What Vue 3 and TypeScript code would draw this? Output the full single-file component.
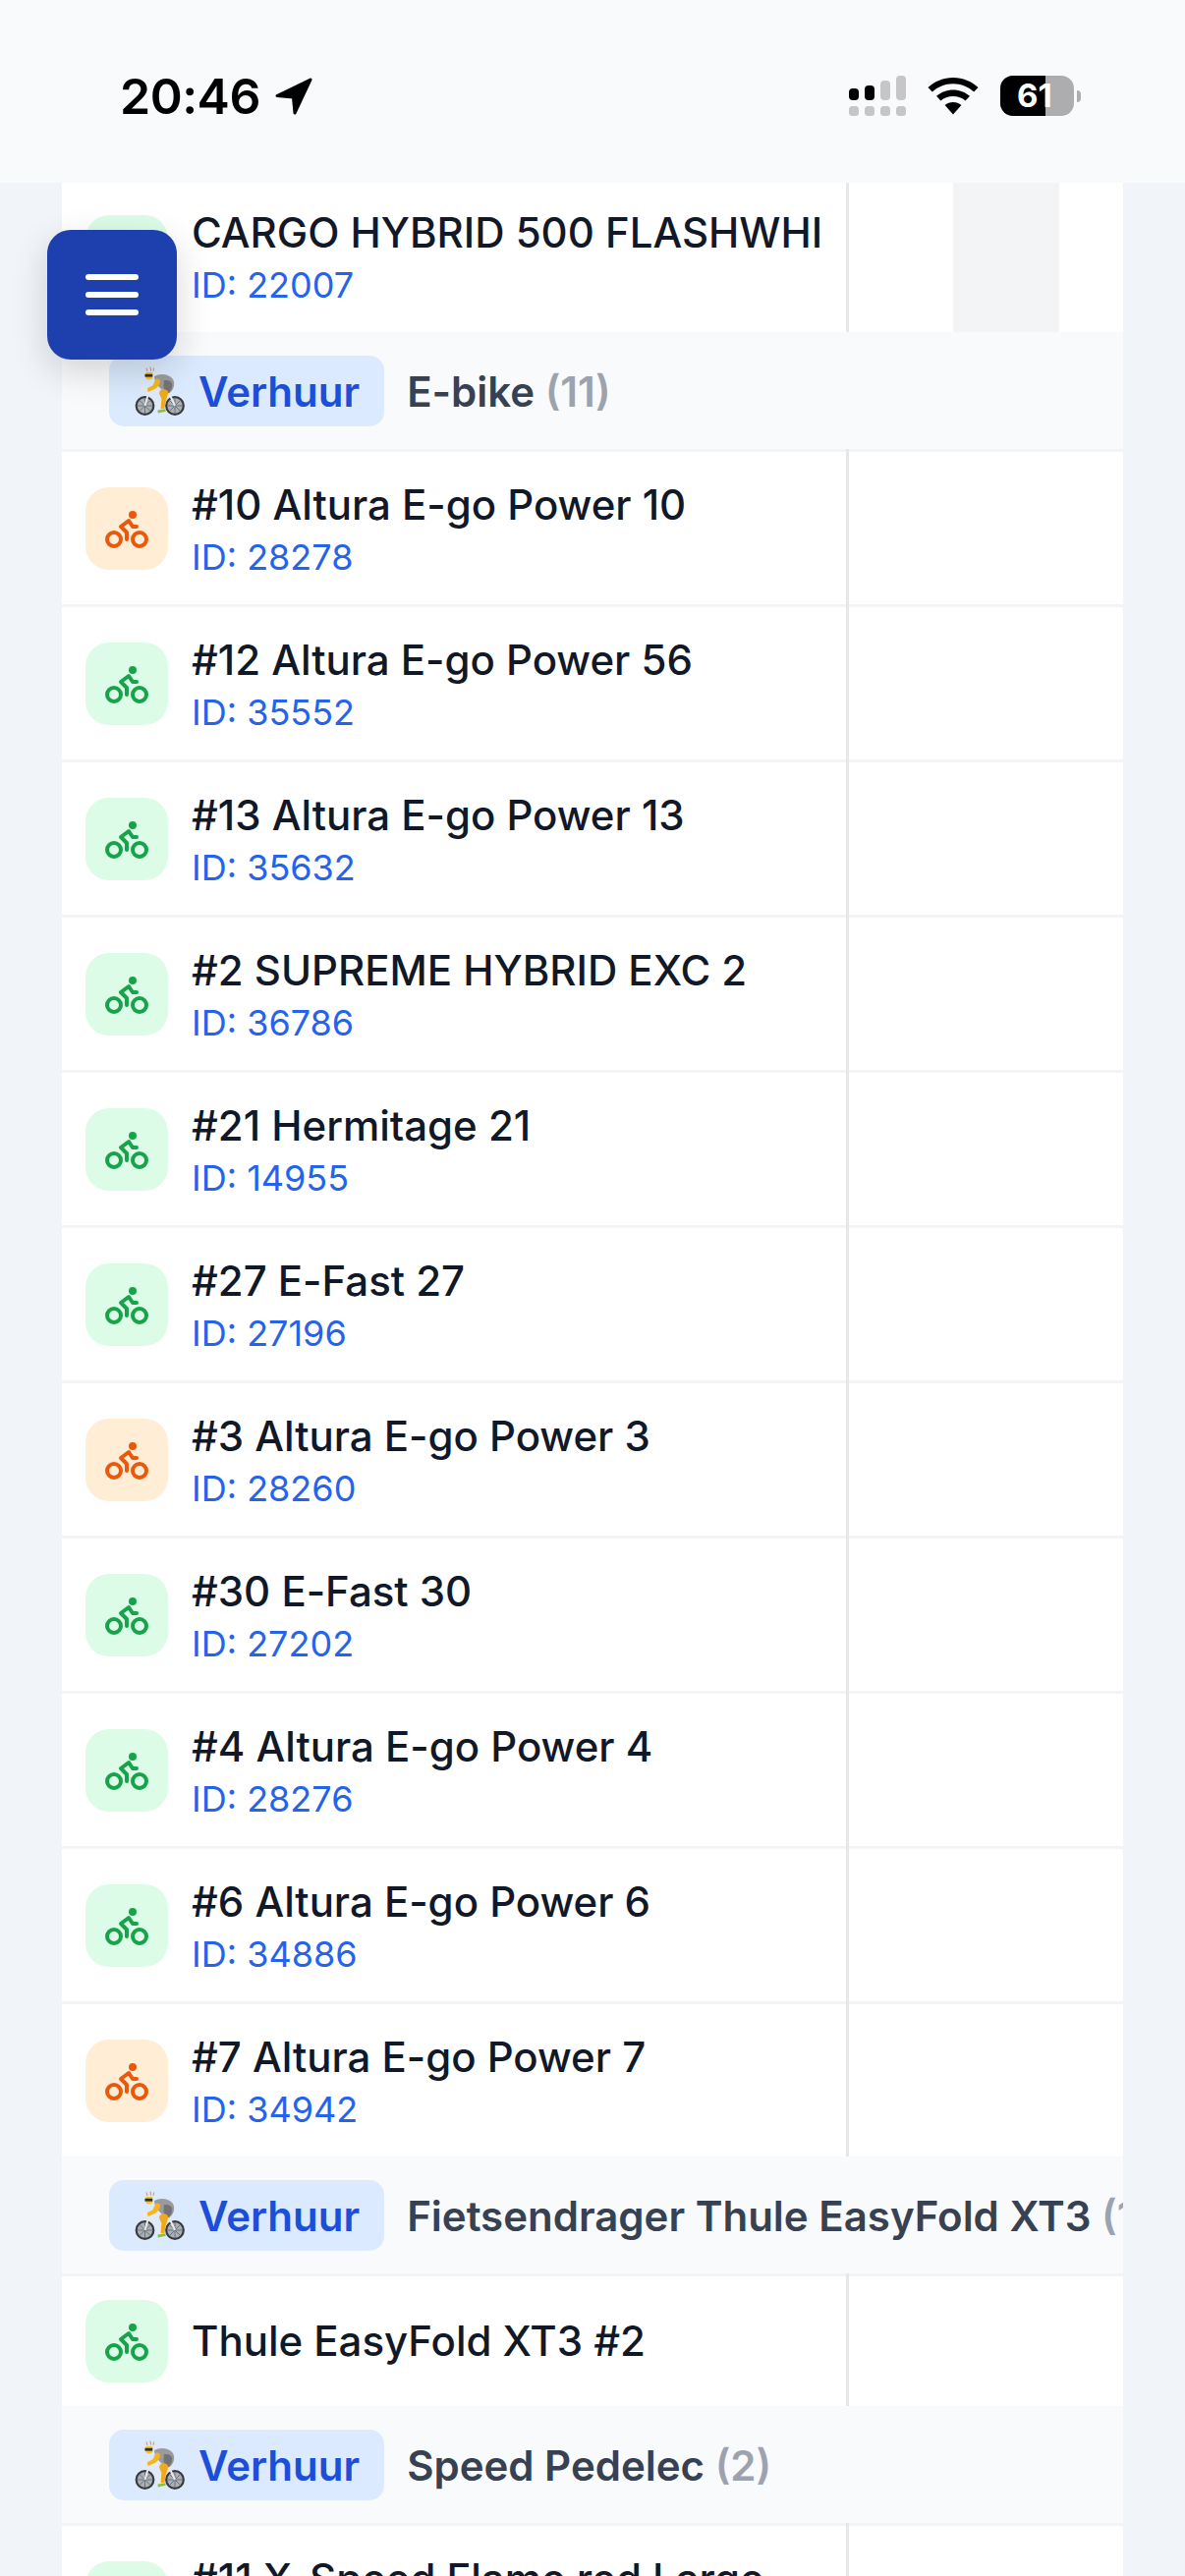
<script setup lang="ts">
type Row = { name: string; id?: string; tone: 'green' | 'orange'; last?: boolean }
type Group = { label: string; count: number; rows: Row[] }

const groups: Group[] = [
  {
    label: 'E-bike',
    count: 11,
    rows: [
      { name: '#10 Altura E-go Power 10', id: '28278', tone: 'orange' },
      { name: '#12 Altura E-go Power 56', id: '35552', tone: 'green' },
      { name: '#13 Altura E-go Power 13', id: '35632', tone: 'green' },
      { name: '#2 SUPREME HYBRID EXC 2', id: '36786', tone: 'green' },
      { name: '#21 Hermitage 21', id: '14955', tone: 'green' },
      { name: '#27 E-Fast 27', id: '27196', tone: 'green' },
      { name: '#3 Altura E-go Power 3', id: '28260', tone: 'orange' },
      { name: '#30 E-Fast 30', id: '27202', tone: 'green' },
      { name: '#4 Altura E-go Power 4', id: '28276', tone: 'green' },
      { name: '#6 Altura E-go Power 6', id: '34886', tone: 'green' },
      { name: '#7 Altura E-go Power 7', id: '34942', tone: 'orange', last: true }
    ]
  },
  {
    label: 'Fietsendrager Thule EasyFold XT3',
    count: 1,
    rows: [{ name: 'Thule EasyFold XT3 #2', tone: 'green', last: true }]
  },
  {
    label: 'Speed Pedelec',
    count: 2,
    rows: [{ name: '#11 X-Speed Flame red Large', id: '31840', tone: 'green' }]
  }
]
</script>

<template>
  <div class="page">
    <header class="status">
      <div class="status-left">
        <span class="time">20:46</span>
        <svg class="arrow" viewBox="0 0 38 38"><path d="M36 2 20 36 18.500 20 2 18.500z" fill="#000" stroke="#000" stroke-width="3" stroke-linejoin="round" /></svg>
      </div>
      <div class="status-right">
        <svg class="signal" viewBox="0 0 58 41">
          <rect x="0" y="13" width="10" height="12" rx="4" fill="#000" />
          <rect x="16" y="10" width="10" height="15" rx="4" fill="#000" />
          <rect x="32" y="5" width="10" height="20" rx="4" fill="#c6c6c8" />
          <rect x="48" y="0" width="10" height="25" rx="4" fill="#c6c6c8" />
          <rect x="0" y="31" width="10" height="10" rx="3.500" fill="#c6c6c8" />
          <rect x="16" y="31" width="10" height="10" rx="3.500" fill="#c6c6c8" />
          <rect x="32" y="31" width="10" height="10" rx="3.500" fill="#c6c6c8" />
          <rect x="48" y="31" width="10" height="10" rx="3.500" fill="#c6c6c8" />
        </svg>
        <svg class="wifi" viewBox="0 0 52 38">
          <path d="M26 0C16 0 7.500 3.700 .5 10l4.300 4.600C10.500 9.400 17.800 6.300 26 6.300s15.500 3.100 21.200 8.300l4.300-4.600C44.500 3.700 36 0 26 0z" fill="#000" />
          <path d="M26 12.500c-6.500 0-12.300 2.400-17 6.300l4.400 4.700c3.400-2.800 7.700-4.500 12.600-4.500s9.200 1.700 12.600 4.500l4.400-4.700c-4.700-3.900-10.500-6.300-17-6.300z" fill="#000" />
          <path d="M26 25c-3.200 0-6.100 1.100-8.400 3L26 37.500 34.400 28c-2.300-1.900-5.200-3-8.400-3z" fill="#000" />
        </svg>
        <div class="battery">
          <div class="battery-body">
            <div class="battery-fill"></div>
            <span class="battery-text">61</span>
          </div>
          <div class="battery-nub"></div>
        </div>
      </div>
    </header>

    <main class="scroller">
      <div class="table">
        <div class="row row-first last">
          <div class="cell-main">
            <div class="bike green">
              <svg viewBox="0 0 24 24" fill="none" stroke="currentColor" stroke-width="2" stroke-linecap="round" stroke-linejoin="round"><circle cx="18.500" cy="17.500" r="3.500" /><circle cx="5.500" cy="17.500" r="3.500" /><circle cx="15" cy="5" r="1" /><path d="M12 17.500V14l-3-3 4-3 2 3h2" /></svg>
            </div>
            <div class="info">
              <div class="title title-cut">CARGO HYBRID 500 FLASHWHITE</div>
              <div class="rid">ID: 22007</div>
            </div>
          </div>
          <div class="day"></div>
          <div class="day day-off"></div>
          <div class="day"></div>
        </div>

        <template v-for="g in groups" :key="g.label">
          <div class="group">
            <span class="pill">
              <svg class="cyclist" viewBox="0 0 51 51">
                <g fill="none">
                  <circle cx="10.500" cy="40" r="8.800" stroke="#3a3a3c" stroke-width="2.200" fill="#a9b0b8" />
                  <circle cx="41" cy="40" r="8.800" stroke="#3a3a3c" stroke-width="2.200" fill="#a9b0b8" />
                  <path d="M10.500 32v16M2.500 40h16M5 34.500l11 11M16 34.500l-11 11M41 32v16M33 40h16M35.500 34.500l11 11M46.500 34.500l-11 11" stroke="#6d7278" stroke-width="1" />
                  <path d="M10.500 40 15 24l12 18 8-15 6 13M15 24l20 3M27 42h-4" stroke="#e9e9ee" stroke-width="2" />
                </g>
                <path d="M20 10c6-3.500 15-2.500 19 3 2.500 4.500 1 11-4 14.500-3-1-6.500-3-8.500-5-3-3-6.500-7-6.500-12.500z" fill="#9b9b9e" />
                <path d="M30 14c3.500-.5 7 .5 8 3.500.8 3.500-1 7-3.500 9.500-2-1-4.500-3-5-6z" fill="#737377" />
                <path d="M22 12.500c2-.5 4 .6 4 2.500 0 3-2.200 5.500-4.500 7.500l-7.500 3.500-2-3.200 6.500-3.500c1.500-2.500 1.500-4.600 3.500-6.800z" fill="#f5b51e" />
                <path d="M28 23.500c2.500-.5 5.500.3 6 2.500.4 2.500-1.500 6-2.300 9.500l-1.500 8-3.600-.5.800-10-2.400-5.500c.4-2 1-3.500 3-4z" fill="#f0a81c" />
                <ellipse cx="9.800" cy="23" rx="3.200" ry="2.400" fill="#e9e9ee" />
                <circle cx="14.800" cy="9.300" r="4.200" fill="#f7c325" />
                <path d="M10.500 7.800h7.600v2.800h-7.600z" fill="#2d2d2f" />
                <path d="M9.500 5.800C9.500 2 13 .2 16 .2c3.800 0 5.800 2.500 5.600 4.800-3.500.8-8 1.200-12.100.8z" fill="#e6e6ea" />
                <path d="M12 1.500l1 3.500M16 .6l.6 4M19.500 1.500l-.4 3.200" stroke="#8d8d92" stroke-width=".8" fill="none" />
                <path d="M23.500 44.500l7.500-1 .8 2.300-8 1.700z" fill="#8ac23b" />
              </svg>
              <span class="pill-text">Verhuur</span>
            </span>
            <span class="group-name">{{ g.label }} <span class="count">({{ g.count }})</span></span>
          </div>

          <div v-for="r in g.rows" :key="r.name" class="row" :class="{ last: r.last, compact: !r.id }">
            <div class="cell-main">
              <div class="bike" :class="r.tone">
                <svg viewBox="0 0 24 24" fill="none" stroke="currentColor" stroke-width="2" stroke-linecap="round" stroke-linejoin="round"><circle cx="18.500" cy="17.500" r="3.500" /><circle cx="5.500" cy="17.500" r="3.500" /><circle cx="15" cy="5" r="1" /><path d="M12 17.500V14l-3-3 4-3 2 3h2" /></svg>
              </div>
              <div class="info">
                <div class="title">{{ r.name }}</div>
                <div v-if="r.id" class="rid">ID: {{ r.id }}</div>
              </div>
            </div>
          </div>
        </template>
      </div>
    </main>

    <button class="menu" type="button" aria-label="Menu">
      <span></span><span></span><span></span>
    </button>
  </div>
</template>

<style>
html, body { margin: 0; padding: 0; background: #f1f5f9; }
</style>

<style scoped>
.page {
  position: relative;
  width: 1206px;
  height: 2622px;
  overflow: hidden;
  display: flex;
  flex-direction: column;
  background: #f1f5f9;
  font-family: Inter, "Liberation Sans", sans-serif;
}
.status {
  flex: 0 0 186px;
  box-sizing: border-box;
  display: flex;
  justify-content: space-between;
  align-items: flex-start;
  background: #f9fafc;
  padding: 70px 106px 0 122px;
  position: relative;
  z-index: 2;
}
.status-left { display: flex; align-items: center; gap: 15px; height: 56px; }
.time { font-size: 50px; font-weight: 600; color: #000; line-height: 56px; letter-spacing: -0.5px; }
.arrow { width: 38px; height: 38px; }
.status-right { display: flex; align-items: flex-start; padding-top: 7px; }
.signal { width: 58px; height: 41px; }
.wifi { width: 52px; height: 38px; margin: 2px 22px 0 22px; }
.battery { display: flex; align-items: center; gap: 3px; }
.battery-body {
  position: relative;
  width: 75px;
  height: 41px;
  border-radius: 13px;
  overflow: hidden;
  background: #adadaf;
}
.battery-fill { position: absolute; left: 0; top: 0; bottom: 0; width: 46px; background: #000; }
.battery-text {
  position: absolute;
  left: 17px;
  top: 0;
  line-height: 41px;
  font-size: 33px;
  font-weight: 700;
  color: #fff;
}
.battery-nub { width: 4px; height: 12px; background: #adadaf; border-radius: 0 4px 4px 0; }

.scroller { flex: 1; min-height: 0; overflow: hidden; padding: 0 63px; }
.table { width: 1080px; margin-top: -3px; background: #fff; }

.row {
  position: relative;
  display: flex;
  box-sizing: border-box;
  height: 158px;
  border-bottom: 3px solid #f3f4f6;
  background: #fff;
}
.row::after {
  content: "";
  position: absolute;
  left: 798px;
  top: -3px;
  bottom: -3px;
  width: 3px;
  background: #e5e7eb;
}
.row-first::after { top: 0; }
.row.last { height: 155px; border-bottom: 0; }
.row.last::after { bottom: 0; }
.row.compact { height: 132px; }
.cell-main {
  flex: 0 0 801px;
  box-sizing: border-box;
  display: flex;
  align-items: center;
  gap: 24px;
  padding: 0 27px 0 24px;
  overflow: hidden;
}
.day { flex: 0 0 106px; }
.day-off { flex-basis: 108px; background: #f3f4f6; }

.bike {
  flex: 0 0 84px;
  height: 84px;
  border-radius: 24px;
  display: flex;
  align-items: center;
  justify-content: center;
}
.bike svg { width: 48px; height: 48px; }
.bike.green { background: #dcfce7; color: #16a34a; }
.bike.orange { background: #ffedd5; color: #ea580c; }

.info { min-width: 0; flex: 1; }
.title { font-size: 42px; line-height: 60px; font-weight: 500; color: #111827; white-space: nowrap; letter-spacing: -0.02px; }
.title-cut { overflow: hidden; }
.rid { font-size: 36px; line-height: 47px; color: #2563eb; }

.group {
  box-sizing: border-box;
  height: 122px;
  display: flex;
  align-items: center;
  gap: 23px;
  padding: 1px 0 0 48px;
  background: #f9fafb;
  border-bottom: 3px solid #f3f4f6;
  white-space: nowrap;
  overflow: hidden;
}
.pill {
  flex: none;
  box-sizing: border-box;
  height: 72px;
  display: inline-flex;
  align-items: center;
  gap: 14px;
  padding: 0 25px 0 26px;
  border-radius: 15px;
  background: #dbeafe;
}
.cyclist { width: 51px; height: 51px; flex: none; }
.pill-text { font-size: 42px; font-weight: 600; color: #1d4ed8; }
.group-name { font-size: 42px; font-weight: 600; color: #374151; }
.count { color: #9ca3af; }

.menu {
  position: absolute;
  left: 48px;
  top: 234px;
  width: 132px;
  height: 132px;
  padding: 0;
  border: 0;
  border-radius: 24px;
  background: #1e40af;
  box-shadow: 0 12px 36px rgba(0, 0, 0, 0.16);
  display: flex;
  flex-direction: column;
  align-items: center;
  justify-content: center;
  gap: 12px;
  z-index: 3;
}
.menu span { display: block; width: 54px; height: 6px; border-radius: 3px; background: #fff; }
</style>
